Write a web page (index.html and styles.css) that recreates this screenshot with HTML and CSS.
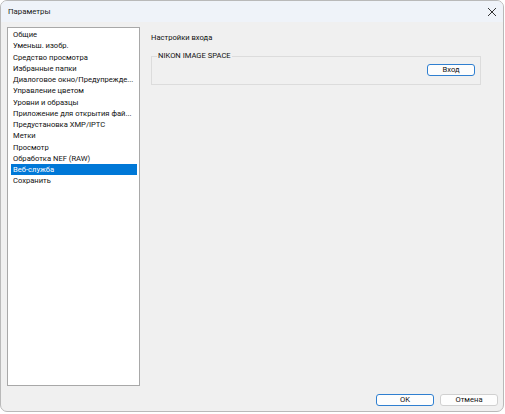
FILE: index.html
```html
<!DOCTYPE html>
<html lang="ru">
<head>
<meta charset="utf-8">
<title>Параметры</title>
<link rel="stylesheet" href="styles.css">
</head>
<body>
<div class="window">
  <div class="titlebar">
    <span class="title">Параметры</span>
    <svg class="close" width="10" height="10" viewBox="0 0 10 10"><path d="M1 1L9 9M9 1L1 9" stroke="#333" stroke-width="1" fill="none"/></svg>
  </div>
  <div class="content">
    <div class="main">
      <ul class="list">
        <li>Общие</li>
        <li>Уменьш. изобр.</li>
        <li>Средство просмотра</li>
        <li>Избранные папки</li>
        <li>Диалоговое окно/Предупрежде...</li>
        <li>Управление цветом</li>
        <li>Уровни и образцы</li>
        <li>Приложение для открытия фай...</li>
        <li>Предустановка XMP/IPTC</li>
        <li>Метки</li>
        <li>Просмотр</li>
        <li>Обработка NEF (RAW)</li>
        <li class="selected">Веб-служба</li>
        <li>Сохранить</li>
      </ul>
      <div class="pane">
        <div class="heading">Настройки входа</div>
        <fieldset class="group">
          <legend>NIKON IMAGE SPACE</legend>
          <div class="group-row">
            <button class="btn default login">Вход</button>
          </div>
        </fieldset>
      </div>
    </div>
    <div class="footer">
      <button class="btn default ok">OK</button>
      <button class="btn cancel">Отмена</button>
    </div>
  </div>
</div>
</body>
</html>
```
FILE: styles.css
```css
html, body {
  margin: 0;
  padding: 0;
  background: #ffffff;
}
body {
  font-family: Roboto, "Noto Sans", sans-serif;
  font-size: 7.6px;
  color: #111111;
}
.window {
  box-sizing: border-box;
  width: 504px;
  height: 412px;
  border: 1px solid #b9b9b9;
  border-radius: 7px;
  overflow: hidden;
  background: #f0f0f0;
  display: flex;
  flex-direction: column;
}
.titlebar {
  height: 21px;
  flex: none;
  background: #eff3f9;
  display: flex;
  align-items: center;
  justify-content: space-between;
  padding: 0 6px 0 7px;
}
.title {
  font-size: 7.8px;
  color: #1a1a1a;
}
.close {
  display: block;
}
.content {
  flex: 1;
  display: flex;
  flex-direction: column;
  padding: 5px 6px 0 6px;
}
.main {
  display: flex;
  gap: 11px;
}
.list {
  box-sizing: border-box;
  width: 133px;
  height: 359px;
  margin: 0;
  padding: 1px 2px 0 3px;
  list-style: none;
  background: #ffffff;
  border: 1px solid #a8a8a8;
}
.list li {
  height: 11.25px;
  line-height: 11.25px;
  padding-left: 2px;
  white-space: nowrap;
  overflow: hidden;
  text-overflow: ellipsis;
}
.list li.selected {
  background: #0078d7;
  color: #ffffff;
}
.pane {
  flex: 1;
  padding-top: 5px;
  padding-right: 16px;
}
.heading {
  height: 12px;
  line-height: 12px;
  margin-bottom: 7px;
}
.group {
  margin: 0;
  padding: 0 5px 8px 5px;
  border: 1px solid #dcdcdc;
  min-width: 0;
}
.group legend {
  padding: 0 1px;
  margin-left: 0;
  line-height: 10px;
}
.group-row {
  display: flex;
  justify-content: flex-end;
  padding-top: 3px;
}
.btn {
  box-sizing: border-box;
  font-family: inherit;
  font-size: 7.6px;
  color: #111111;
  background: #fdfdfd;
  border: 1px solid #d0d0d0;
  border-radius: 3px;
  height: 12px;
  padding: 0;
  line-height: 10px;
}
.btn.default {
  border-color: #2f7fd0;
}
.login {
  width: 48px;
}
.footer {
  display: flex;
  justify-content: flex-end;
  gap: 6px;
  margin-top: 8px;
  margin-right: -1px;
}
.ok, .cancel {
  width: 58px;
}
```
